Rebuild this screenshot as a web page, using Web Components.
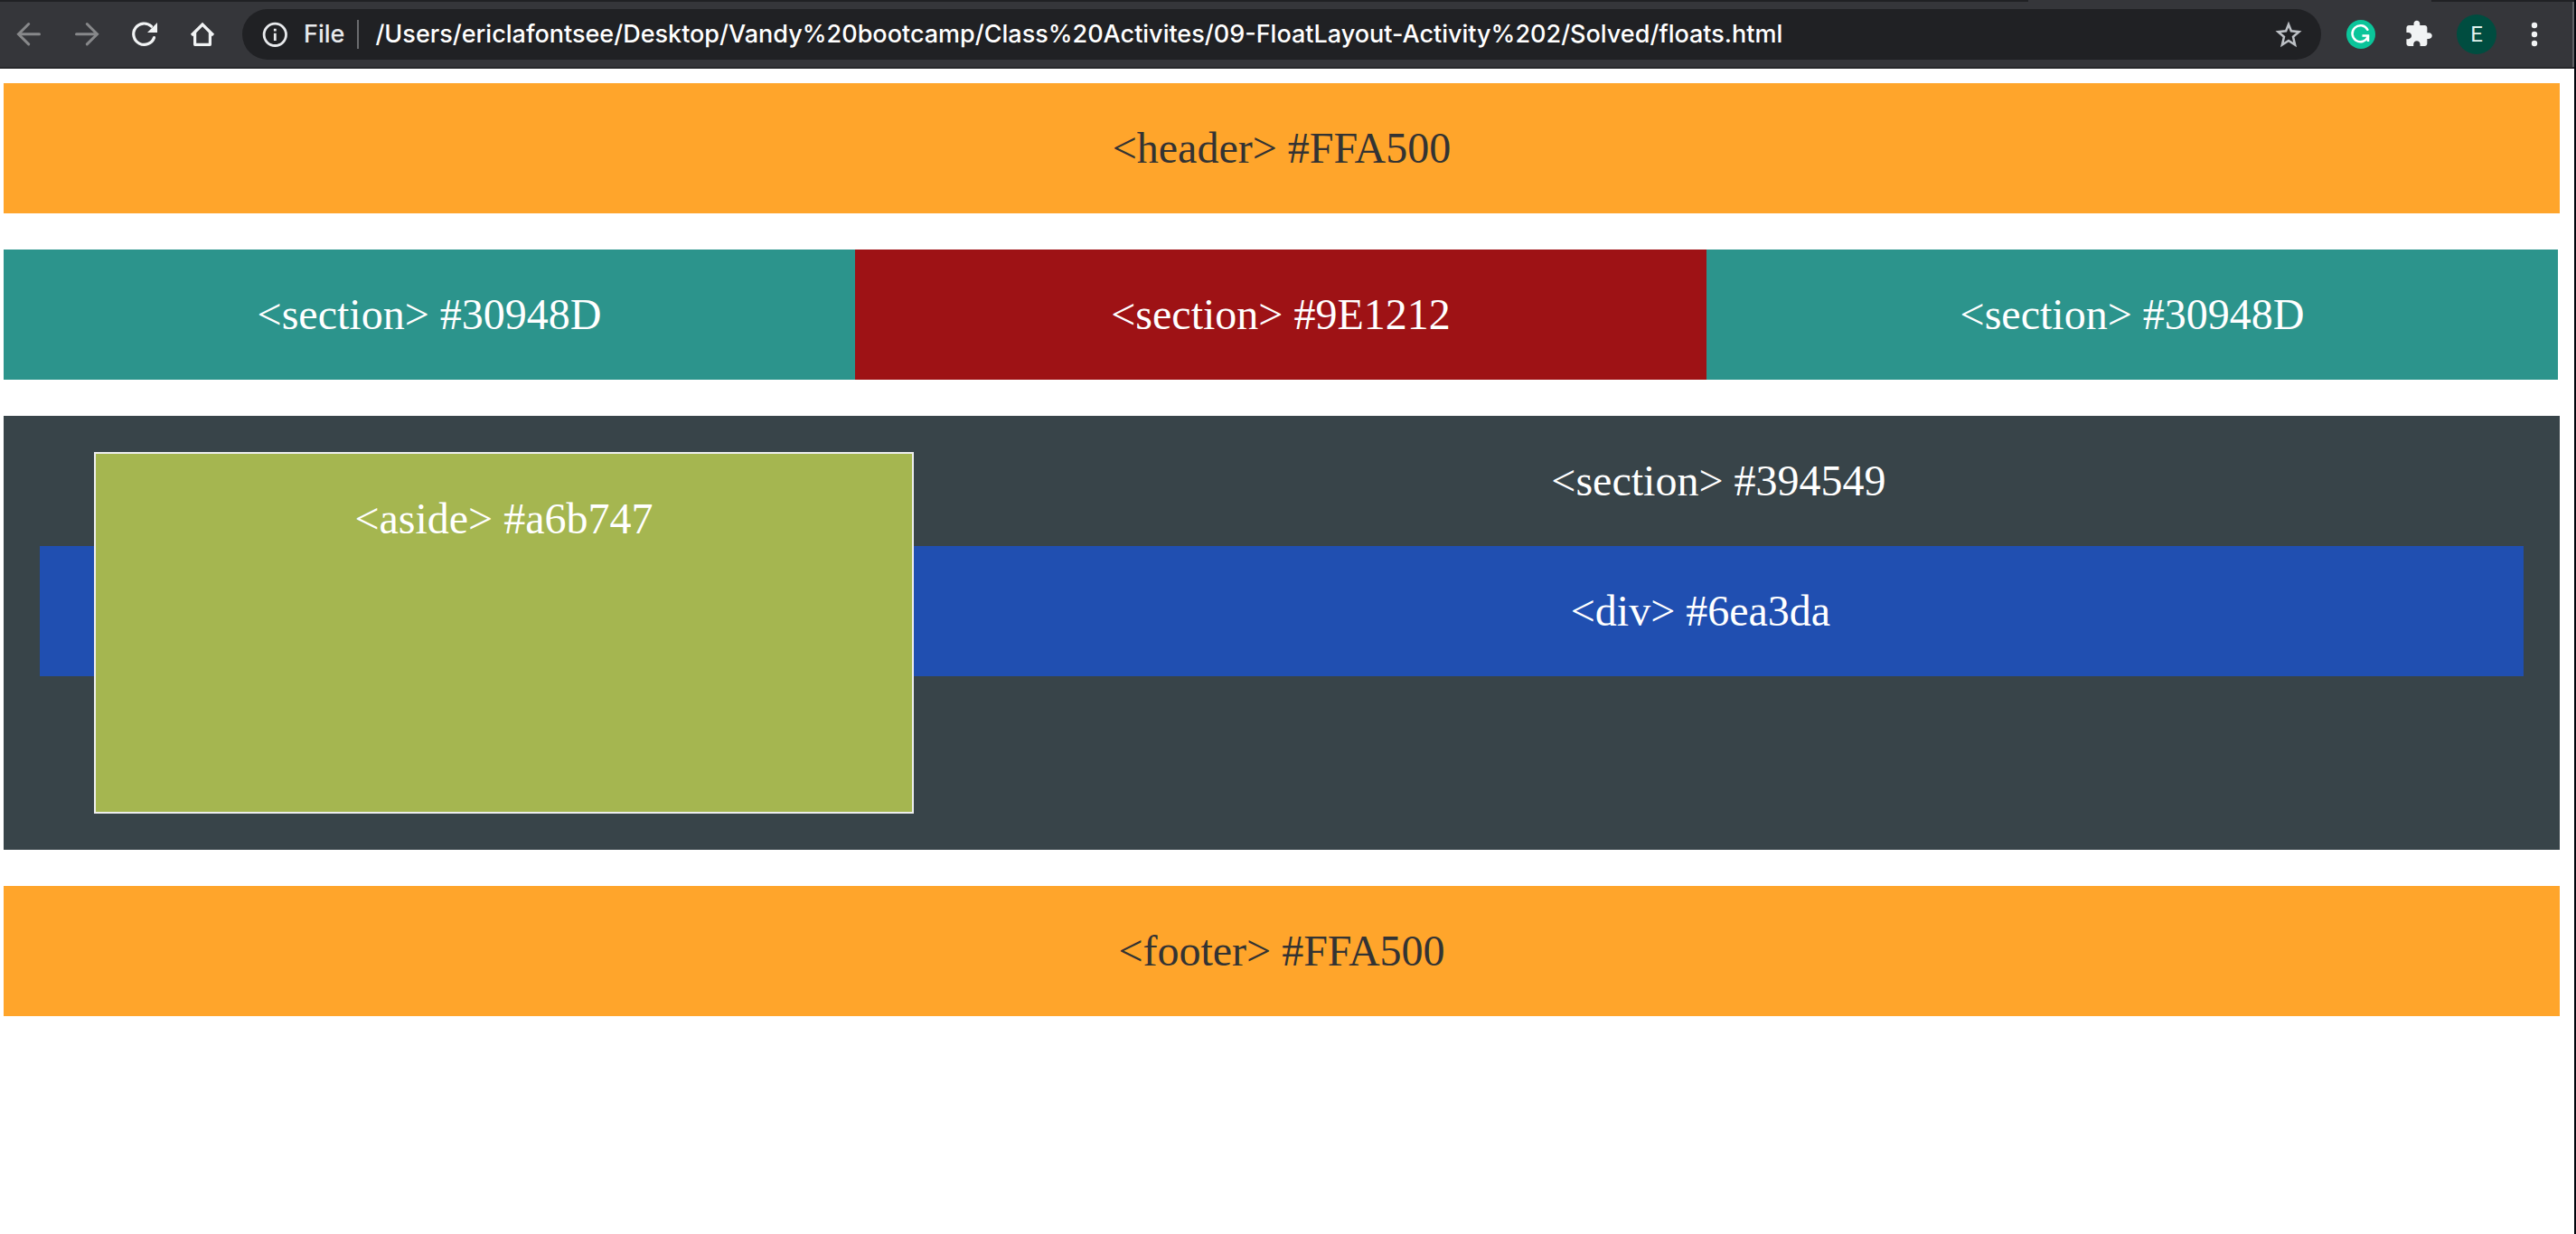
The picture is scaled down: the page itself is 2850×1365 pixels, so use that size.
<!DOCTYPE html>
<html lang="en">
<head>
<meta charset="utf-8">
<title>floats.html</title>
<style>
html, body { margin: 0; min-height: 100%; background: #fff; }
</style>
</head>
<body>
<browser-window>
  <browser-toolbar slot="toolbar" scheme="File" address="/Users/ericlafontsee/Desktop/Vandy%20bootcamp/Class%20Activites/09-FloatLayout-Activity%202/Solved/floats.html"></browser-toolbar>
  <float-page></float-page>
</browser-window>

<script>
const define = (name, html, setup) => {
  const template = document.createElement('template');
  template.innerHTML = html;
  customElements.define(name, class extends HTMLElement {
    connectedCallback() {
      if (this.shadowRoot) return;
      this.attachShadow({ mode: 'open' }).append(template.content.cloneNode(true));
      if (setup) setup(this, this.shadowRoot);
    }
  });
};

/* Icon set, drawn in a 40-unit box */
const ICONS = {
  back: '<g fill="none" stroke="#87888a" stroke-width="3" stroke-linecap="round"><path d="M31.500 19.700H9"/><path d="M19.700 8.500L8.500 19.700L19.700 30.900"/></g>',
  forward: '<g fill="none" stroke="#87888a" stroke-width="3" stroke-linecap="round"><path d="M8.500 19.700H31"/><path d="M20.300 8.500L31.500 19.700L20.300 30.900"/></g>',
  reload: '<path d="M30.500 23.600A11.700 11.700 0 1 1 27.500 11.200" fill="none" stroke="#f1f3f4" stroke-width="3.200" stroke-linecap="round"/><path d="M34 7V18H23Z" fill="#f1f3f4"/>',
  home: '<path d="M8 21L20 9L32 21" fill="none" stroke="#f1f3f4" stroke-width="3.200"/><path d="M11.600 18V31.300H28.400V18" fill="none" stroke="#f1f3f4" stroke-width="3.200" stroke-linejoin="round"/>',
  info: '<circle cx="20.300" cy="20.300" r="12.200" fill="none" stroke="#e8eaed" stroke-width="2.800"/><path d="M18.900 18.800H21.700V27H18.900ZM18.900 13.800H21.700V16.600H18.900Z" fill="#e8eaed"/>',
  star: '<path d="M20 9L22.900 16.300L31.500 17.200L25 22.700L27.100 31.500L20 27L12.900 31.500L15 22.700L8.500 17.200L17.100 16.300Z" fill="none" stroke="#bdc1c6" stroke-width="2.500"/>',
  grammar: '<circle cx="20" cy="20" r="16" fill="#0bc59a"/><path d="M27.400 14.800A9 9 0 1 0 28 22.200" fill="none" stroke="#fff" stroke-width="2.500" stroke-linecap="round"/><path d="M21.500 21.400H28V28" fill="none" stroke="#fff" stroke-width="2.500"/>',
  puzzle: '<path transform="translate(3.700 3.300) scale(1.350)" d="M20.500 11H19V7c0-1.100-.9-2-2-2h-4V3.500C13 2.120 11.880 1 10.500 1S8 2.120 8 3.500V5H4c-1.100 0-1.990.9-1.990 2v3.800H3.500c1.490 0 2.700 1.210 2.700 2.700s-1.210 2.700-2.700 2.700H2V20c0 1.100.9 2 2 2h3.800v-1.500c0-1.490 1.210-2.700 2.700-2.700 1.490 0 2.700 1.210 2.700 2.700V22H17c1.100 0 2-.9 2-2v-4h1.500c1.380 0 2.500-1.120 2.500-2.500S21.880 11 20.500 11z" fill="#f1f3f4"/>',
  menu: '<g fill="#f1f3f4"><circle cx="20" cy="10" r="3.200"/><circle cx="20" cy="20" r="3.200"/><circle cx="20" cy="30" r="3.200"/></g>'
};

define('tool-button', `
<style>
  :host { display: block; flex: none; }
  button { display: grid; place-items: center; width: 64px; height: 56px; margin: 0; padding: 0; border: 0; background: none; }
  svg { display: block; width: 40px; height: 40px; }
  :host([icon="info"]) button, :host([icon="star"]) button { width: 40px; }
</style>
<button type="button"><svg viewBox="0 0 40 40" aria-hidden="true"></svg></button>`,
(host, root) => {
  root.querySelector('svg').innerHTML = ICONS[host.getAttribute('icon')];
  root.querySelector('button').setAttribute('aria-label', host.getAttribute('icon'));
});

define('profile-badge', `
<style>
  :host { display: grid; place-items: center; flex: none; width: 64px; }
  button { width: 44px; height: 44px; padding: 0; border: 0; border-radius: 50%; background: #004d40; color: #e0f2ee; font: 24px/44px Roboto, sans-serif; text-align: center; }
</style>
<button type="button"><slot></slot></button>`);

define('address-bar', `
<style>
  :host { display: flex; align-items: center; flex: 1; height: 56px; box-sizing: border-box; padding: 0 16px; border-radius: 28px; background: #202124; font: 500 27px/56px Inter, "Liberation Sans", sans-serif; }
  label { color: #e8eaed; margin-left: 12px; }
  .rule { width: 2px; height: 32px; margin: 0 18px 0 14px; background: #6b6c6f; }
  input { flex: 1; min-width: 0; height: 56px; padding: 0; border: 0; outline: 0; background: none; color: #fff; font: inherit; }
</style>
<tool-button icon="info"></tool-button>
<label for="url"></label>
<span class="rule"></span>
<input id="url" type="text" spellcheck="false">
<tool-button icon="star"></tool-button>`,
(host, root) => {
  root.querySelector('label').textContent = host.getAttribute('scheme');
  root.querySelector('input').value = host.getAttribute('address');
});

define('browser-toolbar', `
<style>
  :host { display: block; background: #35363a; border-bottom: 2px solid #27282b; }
  .tabs { display: flex; height: 2px; }
  .tabs i { background: #202124; }
  .tabs .before { flex: 0 1 2244px; }
  .tabs .active { flex: 1; background: #35363a; }
  .tabs .after { flex: none; width: 158px; }
  .bar { display: flex; align-items: center; height: 72px; padding-right: 10px; border-right: 2px solid #5f6063; }
  address-bar { margin: 0 12px; }
</style>
<div class="tabs"><i class="before"></i><i class="active"></i><i class="after"></i></div>
<div class="bar">
  <tool-button icon="back"></tool-button>
  <tool-button icon="forward"></tool-button>
  <tool-button icon="reload"></tool-button>
  <tool-button icon="home"></tool-button>
  <address-bar></address-bar>
  <tool-button icon="grammar"></tool-button>
  <tool-button icon="puzzle"></tool-button>
  <profile-badge>E</profile-badge>
  <tool-button icon="menu"></tool-button>
</div>`,
(host, root) => {
  const bar = document.createElement('address-bar');
  bar.setAttribute('scheme', host.getAttribute('scheme'));
  bar.setAttribute('address', host.getAttribute('address'));
  root.querySelector('address-bar').replaceWith(bar);
});

define('browser-window', `
<style>
  :host { display: flex; flex-direction: column; min-height: 100vh; box-sizing: border-box; border-right: 2px solid #02060d; background: #fff; }
</style>
<slot name="toolbar"></slot>
<slot></slot>`);

/* A coloured block with one centred caption line */
define('color-block', `
<style>
  :host { display: block; padding: 40px; text-align: center; background: var(--fill); color: var(--ink, #fff); }
</style>
<slot></slot>`);

define('float-aside', `
<style>
  :host { display: block; float: left; box-sizing: border-box; width: 33%; height: 400px; margin-left: 60px; padding: 40px 0; border: 2px solid #eee; background: #a5b650; color: #fff; text-align: center; }
</style>
<slot></slot>`);

define('float-page', `
<style>
  :host { display: flex; flex-direction: column; gap: 40px; padding: 16px 16px 40px 4px; font: 48px/64px "Liberation Serif", "Times New Roman", serif; }
  .row { display: flex; padding-right: 2px; }
  .row color-block { flex: 1; }
  .orange { --fill: #ffa52b; --ink: #333; }
  .teal { --fill: #2c948c; }
  .red { --fill: #9e1215; }
  .blue { --fill: #204fb1; }
  .main { display: flow-root; padding: 40px; background: #384449; color: #fff; text-align: center; }
  .caption { margin-bottom: 40px; }
</style>
<header><color-block class="orange">&lt;header&gt; #FFA500</color-block></header>
<div class="row">
  <color-block class="teal">&lt;section&gt; #30948D</color-block>
  <color-block class="red">&lt;section&gt; #9E1212</color-block>
  <color-block class="teal">&lt;section&gt; #30948D</color-block>
</div>
<section class="main">
  <float-aside>&lt;aside&gt; #a6b747</float-aside>
  <div class="caption">&lt;section&gt; #394549</div>
  <color-block class="blue">&lt;div&gt; #6ea3da</color-block>
</section>
<footer><color-block class="orange">&lt;footer&gt; #FFA500</color-block></footer>`);
</script>
</body>
</html>
